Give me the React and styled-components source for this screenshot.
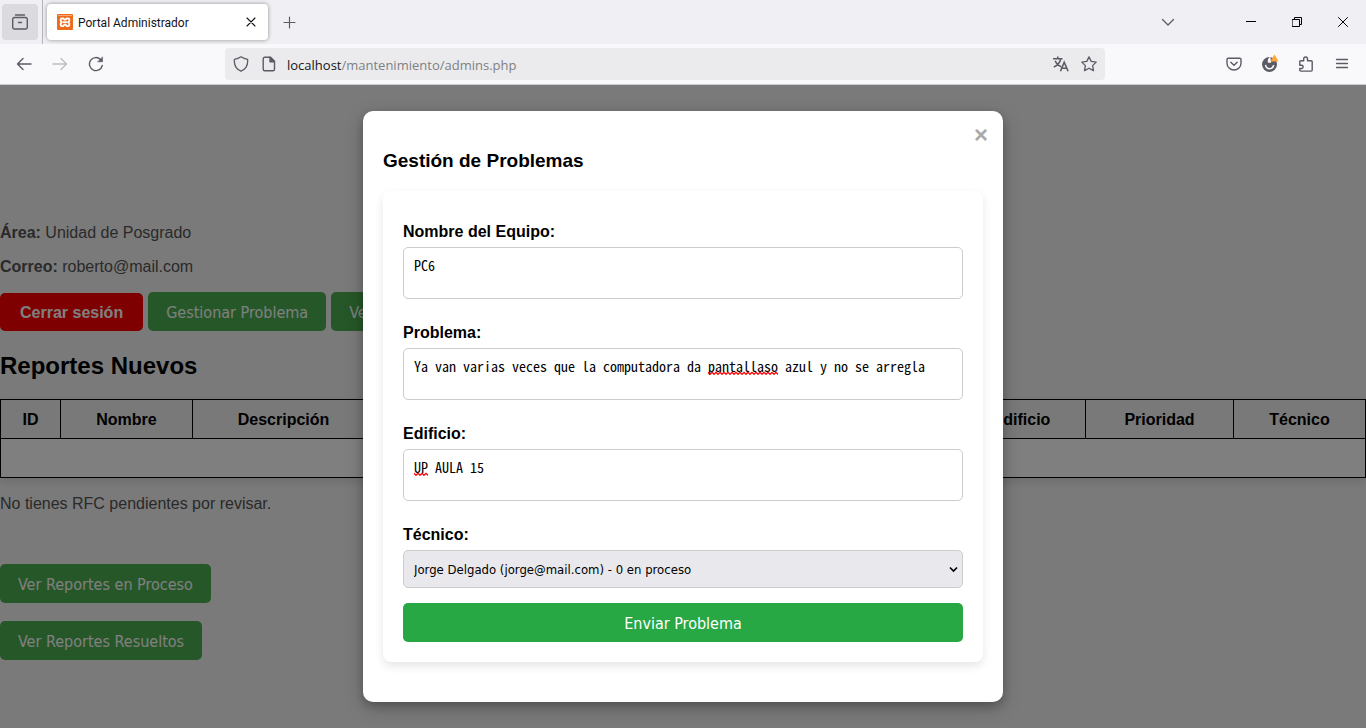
import React from "react";
import styled, { createGlobalStyle } from "styled-components";

const sans = `Arial, "Liberation Sans", sans-serif`;
const controlFont = `Tahoma, "DejaVu Sans Condensed", "DejaVu Sans", sans-serif`;
const monoFont = `"Noto Sans Mono CJK SC", "DejaVu Sans Mono", monospace`;

const GlobalStyle = createGlobalStyle`
  *, *::before, *::after { box-sizing: border-box; }
  body { margin: 0; font-family: ${sans}; font-size: 16px; line-height: 18px; }
  button, input, textarea, select { font: inherit; }
`;

const Window = styled.div`
  display: flex;
  flex-direction: column;
  min-height: 100vh;
`;

/* ---------- Browser chrome ---------- */

const TabBar = styled.div`
  display: flex;
  align-items: center;
  height: 44px;
  padding-left: 2px;
  background: #f0f0f4;
  color: #5b5b66;
`;

const IconButton = styled.button`
  display: flex;
  align-items: center;
  justify-content: center;
  flex: none;
  width: ${(p) => p.$width || 36}px;
  height: ${(p) => p.$height || 36}px;
  padding: 0;
  border: 0;
  border-radius: 4px;
  background: ${(p) => (p.$filled ? "#dadadf" : "transparent")};
  color: ${(p) => p.$color || "#5b5b66"};
`;

const TabDivider = styled.span`
  width: 1px;
  height: 44px;
  margin: 0 4px;
  background: #b3b3b9;
`;

const Tab = styled.div`
  display: flex;
  align-items: center;
  width: 221px;
  height: 36px;
  padding: 0 4px 0 10px;
  border-radius: 4px;
  background: #fff;
  box-shadow: 0 0 4px rgba(0, 0, 0, 0.4);
  color: #15141a;
`;

const TabTitle = styled.span`
  flex: 1;
  margin-left: 5px;
  padding-top: 2px;
  font-family: "Segoe UI", Roboto, sans-serif;
  font-size: 12px;
`;

const WindowControls = styled.div`
  display: flex;
  margin-left: auto;
`;

const NavBar = styled.div`
  display: flex;
  align-items: center;
  height: 41px;
  padding: 0 6px;
  border-bottom: 1px solid #ccccd1;
  background: #f9f9fb;
`;

const AddressBar = styled.div`
  display: flex;
  align-items: center;
  flex: 1;
  height: 32px;
  margin: 0 111px;
  padding: 0 2px;
  border-radius: 4px;
  background: #ebebed;
`;

const Address = styled.span`
  flex: 1;
  margin-left: 4px;
  padding-top: 2px;
  font-family: "Segoe UI", "Open Sans", sans-serif;
  font-size: 13px;
  color: #7f7f84;
`;

const Host = styled.span`
  color: #15141a;
`;

/* ---------- Page behind the dialog ---------- */

const Viewport = styled.div`
  position: relative;
  flex: 1;
  overflow: hidden;
  background: #f4f4f4;
`;

const Page = styled.main`
  padding-top: 139px;
`;

const Info = styled.p`
  margin: 0 0 16px;
  color: #555;
`;

const Actions = styled.div`
  display: flex;
  align-items: flex-end;
  gap: 5px;
`;

const LogoutLink = styled.a`
  padding: 11px 20px 9px;
  border-radius: 5px;
  background: #f00;
  color: #fff;
  font-weight: bold;
  text-decoration: none;
`;

const PageButton = styled.button`
  height: 39px;
  padding: 2px 18px 0;
  border: 0;
  border-radius: 5px;
  background: #4caf50;
  color: #fff;
  font-family: ${controlFont};
  font-size: 16px;
`;

const Heading = styled.h2`
  margin: 21px 0 19px;
  font-size: 24px;
  line-height: 28px;
`;

const ReportTable = styled.table`
  width: 100%;
  table-layout: fixed;
  border-collapse: collapse;
  background: #fff;
  box-shadow: 0 4px 8px rgba(0, 0, 0, 0.1);
`;

const HeadCell = styled.th`
  width: ${(p) => (p.$width ? `${p.$width}px` : "auto")};
  height: 39px;
  padding: 2px 0 0;
  border: 1px solid #000;
  background: #f2f2f2;
`;

const BodyCell = styled.td`
  height: 39px;
  padding: 0;
  border: 1px solid #000;
`;

const Notice = styled.p`
  margin: 17px 0 51px;
  color: #555;
`;

const Links = styled.div`
  display: flex;
  flex-direction: column;
  align-items: flex-start;
  gap: 18px;
`;

/* ---------- Dialog ---------- */

const Overlay = styled.div`
  position: absolute;
  inset: 0;
  display: flex;
  align-items: flex-start;
  justify-content: center;
  padding: 26px 20px;
  background: rgba(0, 0, 0, 0.5);
`;

const Dialog = styled.section`
  width: 100%;
  max-width: 640px;
  padding: 10px 20px 40px;
  border-radius: 10px;
  background: #fff;
  box-shadow: 0 4px 8px rgba(0, 0, 0, 0.2), 0 6px 20px rgba(0, 0, 0, 0.2);
`;

const CloseRow = styled.div`
  display: flex;
  justify-content: flex-end;
  margin-right: -5px;
`;

const CloseButton = styled.button`
  height: 28px;
  padding: 0;
  border: 0;
  background: transparent;
  color: #aaa;
  font-size: 24px;
  font-weight: bold;
  line-height: 28px;
`;

const DialogTitle = styled.h3`
  margin: 0 0 18px;
  font-size: 19px;
  line-height: 24px;
`;

const Form = styled.form`
  padding: 31px 20px 20px;
  border-radius: 8px;
  background: #fff;
  box-shadow: 0 4px 10px rgba(0, 0, 0, 0.1);
`;

const Field = styled.div`
  margin-bottom: ${(p) => p.$gap}px;
`;

const Label = styled.label`
  display: block;
  margin-bottom: 5px;
  font-weight: bold;
  line-height: 20px;
`;

const Control = styled.div`
  position: relative;
  font-family: ${(p) => (p.$mono ? monoFont : controlFont)};
  font-size: ${(p) => (p.$mono ? 14 : 13)}px;
  line-height: 16px;
`;

const TextArea = styled.textarea`
  display: block;
  width: 100%;
  height: 52px;
  padding: 9px 10px;
  border: 1px solid #ccc;
  border-radius: 5px;
  background: #fff;
  color: #000;
  resize: none;
`;

const Squiggle = styled.svg`
  position: absolute;
  top: 23px;
  left: calc(11px + ${(p) => p.$start}ch);
  width: ${(p) => p.$length}ch;
  height: 4px;
  pointer-events: none;
`;

const Select = styled.select`
  display: block;
  width: 100%;
  height: 38px;
  padding: 1px 10px 0;
  border: 1px solid #ccc;
  border-radius: 5px;
  background: #e9e9ed;
  color: #000;
  appearance: none;
`;

const SelectArrow = styled.svg`
  position: absolute;
  top: 16px;
  right: 5px;
  pointer-events: none;
`;

const SubmitButton = styled.button`
  display: block;
  width: 100%;
  height: 39px;
  padding: 2px 0 0;
  border: 0;
  border-radius: 5px;
  background: #28a745;
  color: #fff;
  font-family: ${controlFont};
  font-size: 16px;
`;

/* ---------- Icons ---------- */

const Icon = ({ size = 16, weight = 1.3, children, ...rest }) => (
  <svg
    width={size}
    height={size}
    viewBox={`0 0 ${size} ${size}`}
    fill="none"
    stroke="currentColor"
    strokeWidth={weight}
    strokeLinecap="round"
    strokeLinejoin="round"
    aria-hidden="true"
    {...rest}
  >
    {children}
  </svg>
);

const FirefoxViewIcon = () => (
  <Icon weight={1.4}>
    <path d="M3.5 1h9M2.5 3.5h11a1.8 1.8 0 0 1 1.8 1.8v7.9a1.8 1.8 0 0 1-1.8 1.8h-11A1.8 1.8 0 0 1 .7 13.2V5.3a1.8 1.8 0 0 1 1.8-1.8zM6.5 8.5h3" />
  </Icon>
);

const FaviconIcon = () => (
  <svg width="16" height="16" viewBox="0 0 16 16" aria-hidden="true">
    <rect width="16" height="16" rx="1" fill="#ec6c1f" />
    <rect x="1" y="1" width="14" height="1" fill="#f4a77a" />
    <path
      d="M5 4.300h1.200L7.500 5.700h1L9.800 4.300H11a1.300 1.300 0 0 1 1.300 1.300v1.200L11.300 8.200l1 1.400v1.200a1.300 1.300 0 0 1-1.300 1.300H9.800L8.500 10.700h-1L6.200 12.100H5a1.300 1.300 0 0 1-1.300-1.300V9.600l1-1.400-1-1.400V5.600A1.300 1.300 0 0 1 5 4.300z"
      fill="none"
      stroke="#fff"
      strokeWidth="1.800"
      strokeLinejoin="round"
    />
    <path d="M5.500 7.300h5v1.800h-5z" fill="#fff" />
  </svg>
);

const CloseTabIcon = () => (
  <Icon size={10} weight={1.1}>
    <path d="M1 1l8 8M9 1l-8 8" />
  </Icon>
);

const PlusIcon = () => (
  <Icon size={13} weight={1.2}>
    <path d="M6.5 1v11M1 6.500h11" />
  </Icon>
);

const ChevronIcon = () => (
  <Icon size={14} weight={1.3}>
    <path d="M1.5 4.500L7 10l5.500-5.500" />
  </Icon>
);

const MinimizeIcon = () => (
  <Icon size={10} weight={1} strokeLinecap="butt">
    <path d="M0 4.500h10" />
  </Icon>
);

const RestoreIcon = () => (
  <Icon size={10} weight={1} strokeLinejoin="miter">
    <path d="M.5 2.500h7v7h-7zM2.500 2.500v-2h7v7h-2" />
  </Icon>
);

const CloseWindowIcon = () => (
  <Icon size={10} weight={1}>
    <path d="M.5.5l9 9M9.500.5l-9 9" />
  </Icon>
);

const BackIcon = () => (
  <Icon weight={1.4}>
    <path d="M15 8H1.500M7 2.500L1.500 8 7 13.500" />
  </Icon>
);

const ForwardIcon = () => (
  <Icon weight={1.4}>
    <path d="M1 8h13.500M9 2.500L14.500 8 9 13.500" />
  </Icon>
);

const ReloadIcon = () => (
  <Icon weight={1.4}>
    <path d="M14.300 9.500A6.500 6.500 0 1 1 12.500 3.400" />
    <path d="M14.500 1.200v4.600h-4.600z" fill="currentColor" strokeWidth="0.6" />
  </Icon>
);

const ShieldIcon = () => (
  <Icon>
    <path d="M8 .8c2 1.400 4.200 2.200 6.600 2.500.5 5.200-1.600 9.800-6.600 11.900C3 13.100.9 8.500 1.400 3.300 3.800 3 6 2.200 8 .8z" />
  </Icon>
);

const PageIcon = () => (
  <Icon weight={1.4}>
    <path d="M3.700 1.200h5.800l4 4v8.100a1.500 1.500 0 0 1-1.500 1.500H3.700a1.500 1.500 0 0 1-1.500-1.500V2.700a1.500 1.500 0 0 1 1.500-1.500z" />
    <path d="M9 1.200l4.500 4.500H9z" fill="currentColor" />
  </Icon>
);

const TranslateIcon = () => (
  <Icon weight={1.6} strokeLinecap="butt" strokeLinejoin="miter">
    <path d="M0 2.700h9.500M4.800.5v2.200M2.200 4.700c1 2.700 3.200 4.800 6 6M7.800 2.700C7 6.500 4.600 9.500.8 11M7.500 15.200l3.700-9 3.900 9M8.700 12.300h5.200" />
  </Icon>
);

const StarIcon = () => (
  <Icon>
    <path d="M8 .9l2.200 4.500 5 .7-3.600 3.500.9 5L8 12.200l-4.500 2.400.9-5L.8 6.100l5-.7z" />
  </Icon>
);

const PocketIcon = () => (
  <Icon weight={1.4}>
    <path d="M2.300 2.200h11.400a1.300 1.300 0 0 1 1.300 1.300v3.700a7 6.800 0 0 1-14 0V3.500a1.300 1.300 0 0 1 1.300-1.300z" />
    <path d="M4.800 6.300L8 9.300l3.200-3" />
  </Icon>
);

const AccountIcon = () => (
  <svg width="18" height="20" viewBox="0 0 18 20" aria-hidden="true">
    <circle cx="8.500" cy="10.500" r="7.500" fill="#5b5b66" />
    <path d="M9.500 2.500C7.200 4 6.200 6.300 7 8.800h3.200L9.800 6.500z" fill="#f9f9fb" />
    <path d="M4.500 10.800c.5 2.600 2 3.900 4.200 3.900 2.100 0 3.600-1.200 4-3.500" fill="none" stroke="#f9f9fb" strokeWidth="1.500" />
    <path d="M13.500.5l3.700 6.200a.6.6 0 0 1-.5.9h-6.400a.6.600 0 0 1-.5-.9z" fill="#ffa436" />
  </svg>
);

const ExtensionIcon = () => (
  <Icon weight={1.4}>
    <path d="M1.800 9.200V5.800a1 1 0 0 1 1-1h2.900V2.900a1.900 1.900 0 0 1 3.800 0v1.900h3.700a1 1 0 0 1 1 1v8.300a1 1 0 0 1-1 1H2.800a1 1 0 0 1-1-1v-1.600h2.100a1.700 1.700 0 0 0 0-3.300z" />
  </Icon>
);

const MenuIcon = () => (
  <Icon weight={1.3}>
    <path d="M2.500 3.500h11M2.500 7.500h11M2.500 11.500h11" />
  </Icon>
);

const SpellingMark = ({ id, start, length }) => (
  <Squiggle $start={start} $length={length} aria-hidden="true">
    <defs>
      <pattern id={id} width="4" height="4" patternUnits="userSpaceOnUse">
        <path d="M-1 .5L2 3.300 5 .5" fill="none" stroke="#f00" strokeWidth="1.300" />
      </pattern>
    </defs>
    <rect width="100%" height="4" fill={`url(#${id})`} />
  </Squiggle>
);

/* ---------- Content ---------- */

const columns = [
  { name: "ID", width: 60 },
  { name: "Nombre", width: 132 },
  { name: "Descripción", width: 182 },
  { name: "" },
  { name: "Edificio", width: 128 },
  { name: "Prioridad", width: 148 },
  { name: "Técnico", width: 132 },
];

const textFields = [
  { id: "equipo", label: "Nombre del Equipo:", value: "PC6" },
  {
    id: "problema",
    label: "Problema:",
    value: "Ya van varias veces que la computadora da pantallaso azul y no se arregla",
    misspelled: { start: 42, length: 10 },
  },
  {
    id: "edificio",
    label: "Edificio:",
    value: "UP AULA 15",
    misspelled: { start: 0, length: 2 },
  },
];

const BrowserChrome = () => (
  <header>
    <TabBar>
      <IconButton $filled aria-label="Firefox View"><FirefoxViewIcon /></IconButton>
      <TabDivider />
      <Tab>
        <FaviconIcon />
        <TabTitle>Portal Administrador</TabTitle>
        <IconButton $width={26} $height={24} $color="#15141a" aria-label="Cerrar pestaña"><CloseTabIcon /></IconButton>
      </Tab>
      <IconButton $width={42} aria-label="Nueva pestaña"><PlusIcon /></IconButton>
      <WindowControls>
        <IconButton $width={120} aria-label="Listar pestañas"><ChevronIcon /></IconButton>
        <IconButton $width={46} $color="#000" aria-label="Minimizar"><MinimizeIcon /></IconButton>
        <IconButton $width={46} $color="#000" aria-label="Restaurar"><RestoreIcon /></IconButton>
        <IconButton $width={46} $color="#000" aria-label="Cerrar ventana"><CloseWindowIcon /></IconButton>
      </WindowControls>
    </TabBar>
    <NavBar>
      <IconButton aria-label="Atrás"><BackIcon /></IconButton>
      <IconButton $color="#bdbdc2" aria-label="Adelante"><ForwardIcon /></IconButton>
      <IconButton aria-label="Recargar"><ReloadIcon /></IconButton>
      <AddressBar>
        <IconButton $width={28} $height={28} aria-label="Protección"><ShieldIcon /></IconButton>
        <IconButton $width={28} $height={28} aria-label="Información del sitio"><PageIcon /></IconButton>
        <Address><Host>localhost</Host>/mantenimiento/admins.php</Address>
        <IconButton $width={28} $height={28} aria-label="Traducir"><TranslateIcon /></IconButton>
        <IconButton $width={28} $height={28} aria-label="Marcador"><StarIcon /></IconButton>
      </AddressBar>
      <IconButton aria-label="Pocket"><PocketIcon /></IconButton>
      <IconButton aria-label="Cuenta"><AccountIcon /></IconButton>
      <IconButton aria-label="Extensiones"><ExtensionIcon /></IconButton>
      <IconButton aria-label="Menú"><MenuIcon /></IconButton>
    </NavBar>
  </header>
);

const AdminPage = () => (
  <Page>
    <Info><strong>Área:</strong> Unidad de Posgrado</Info>
    <Info><strong>Correo:</strong> roberto@mail.com</Info>
    <Actions>
      <LogoutLink href="#">Cerrar sesión</LogoutLink>
      <PageButton>Gestionar Problema</PageButton>
      <PageButton>Ver RFC</PageButton>
    </Actions>
    <Heading>Reportes Nuevos</Heading>
    <ReportTable>
      <thead>
        <tr>
          {columns.map((column) => (
            <HeadCell key={column.name} $width={column.width}>{column.name}</HeadCell>
          ))}
        </tr>
      </thead>
      <tbody>
        <tr><BodyCell colSpan={columns.length} /></tr>
      </tbody>
    </ReportTable>
    <Notice>No tienes RFC pendientes por revisar.</Notice>
    <Links>
      <PageButton>Ver Reportes en Proceso</PageButton>
      <PageButton>Ver Reportes Resueltos</PageButton>
    </Links>
  </Page>
);

const ProblemDialog = () => (
  <Overlay>
    <Dialog role="dialog" aria-labelledby="dialog-title">
      <CloseRow><CloseButton aria-label="Cerrar">×</CloseButton></CloseRow>
      <DialogTitle id="dialog-title">Gestión de Problemas</DialogTitle>
      <Form onSubmit={(event) => event.preventDefault()}>
        {textFields.map(({ id, label, value, misspelled }) => (
          <Field key={id} $gap={24}>
            <Label htmlFor={id}>{label}</Label>
            <Control $mono>
              <TextArea id={id} defaultValue={value} spellCheck={false} />
              {misspelled && <SpellingMark id={`${id}-mark`} {...misspelled} />}
            </Control>
          </Field>
        ))}
        <Field $gap={15}>
          <Label htmlFor="tecnico">Técnico:</Label>
          <Control>
            <Select id="tecnico">
              <option>Jorge Delgado (jorge@mail.com) - 0 en proceso</option>
            </Select>
            <SelectArrow width="9" height="7" viewBox="0 0 9 7" fill="none" stroke="#000" strokeWidth="1.600" aria-hidden="true">
              <path d="M1 1.500l3.500 3.500L8 1.500" />
            </SelectArrow>
          </Control>
        </Field>
        <SubmitButton type="submit">Enviar Problema</SubmitButton>
      </Form>
    </Dialog>
  </Overlay>
);

export default function App() {
  return (
    <Window>
      <GlobalStyle />
      <BrowserChrome />
      <Viewport>
        <AdminPage />
        <ProblemDialog />
      </Viewport>
    </Window>
  );
}
